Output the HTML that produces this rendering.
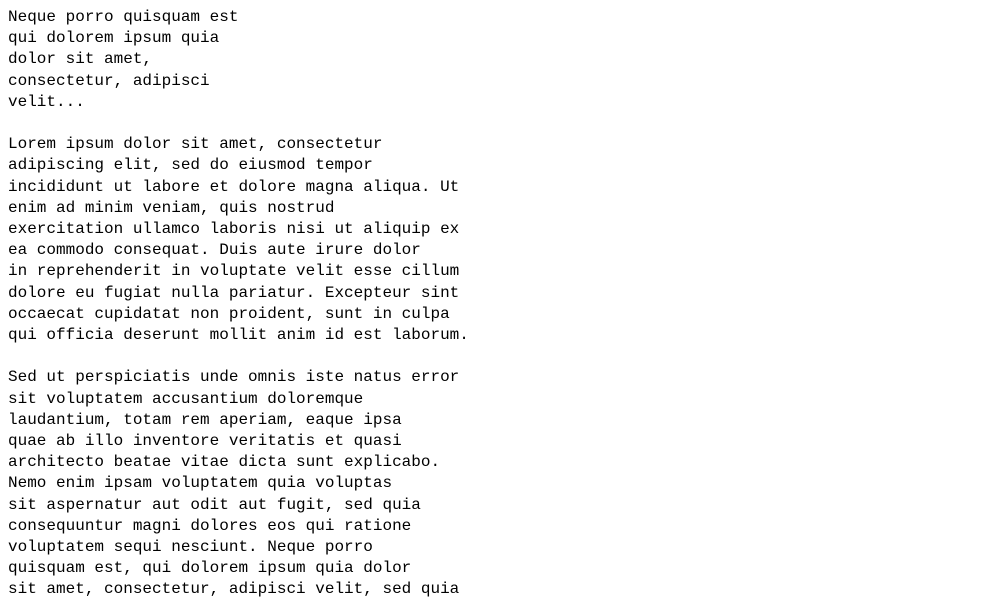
<!DOCTYPE html>
<html><head><meta charset="utf-8"><style>
html,body{margin:0;padding:0;background:#fff;width:1006px;height:601px;overflow:hidden}
pre{margin:0;position:absolute;left:8px;top:7px;font-family:"Liberation Mono",monospace;font-size:16px;line-height:21.2px;color:#000;white-space:pre}
</style></head><body><pre>Neque porro quisquam est
qui dolorem ipsum quia
dolor sit amet,
consectetur, adipisci
velit...

Lorem ipsum dolor sit amet, consectetur
adipiscing elit, sed do eiusmod tempor
incididunt ut labore et dolore magna aliqua. Ut
enim ad minim veniam, quis nostrud
exercitation ullamco laboris nisi ut aliquip ex
ea commodo consequat. Duis aute irure dolor
in reprehenderit in voluptate velit esse cillum
dolore eu fugiat nulla pariatur. Excepteur sint
occaecat cupidatat non proident, sunt in culpa
qui officia deserunt mollit anim id est laborum.

Sed ut perspiciatis unde omnis iste natus error
sit voluptatem accusantium doloremque
laudantium, totam rem aperiam, eaque ipsa
quae ab illo inventore veritatis et quasi
architecto beatae vitae dicta sunt explicabo.
Nemo enim ipsam voluptatem quia voluptas
sit aspernatur aut odit aut fugit, sed quia
consequuntur magni dolores eos qui ratione
voluptatem sequi nesciunt. Neque porro
quisquam est, qui dolorem ipsum quia dolor
sit amet, consectetur, adipisci velit, sed quia</pre></body></html>
